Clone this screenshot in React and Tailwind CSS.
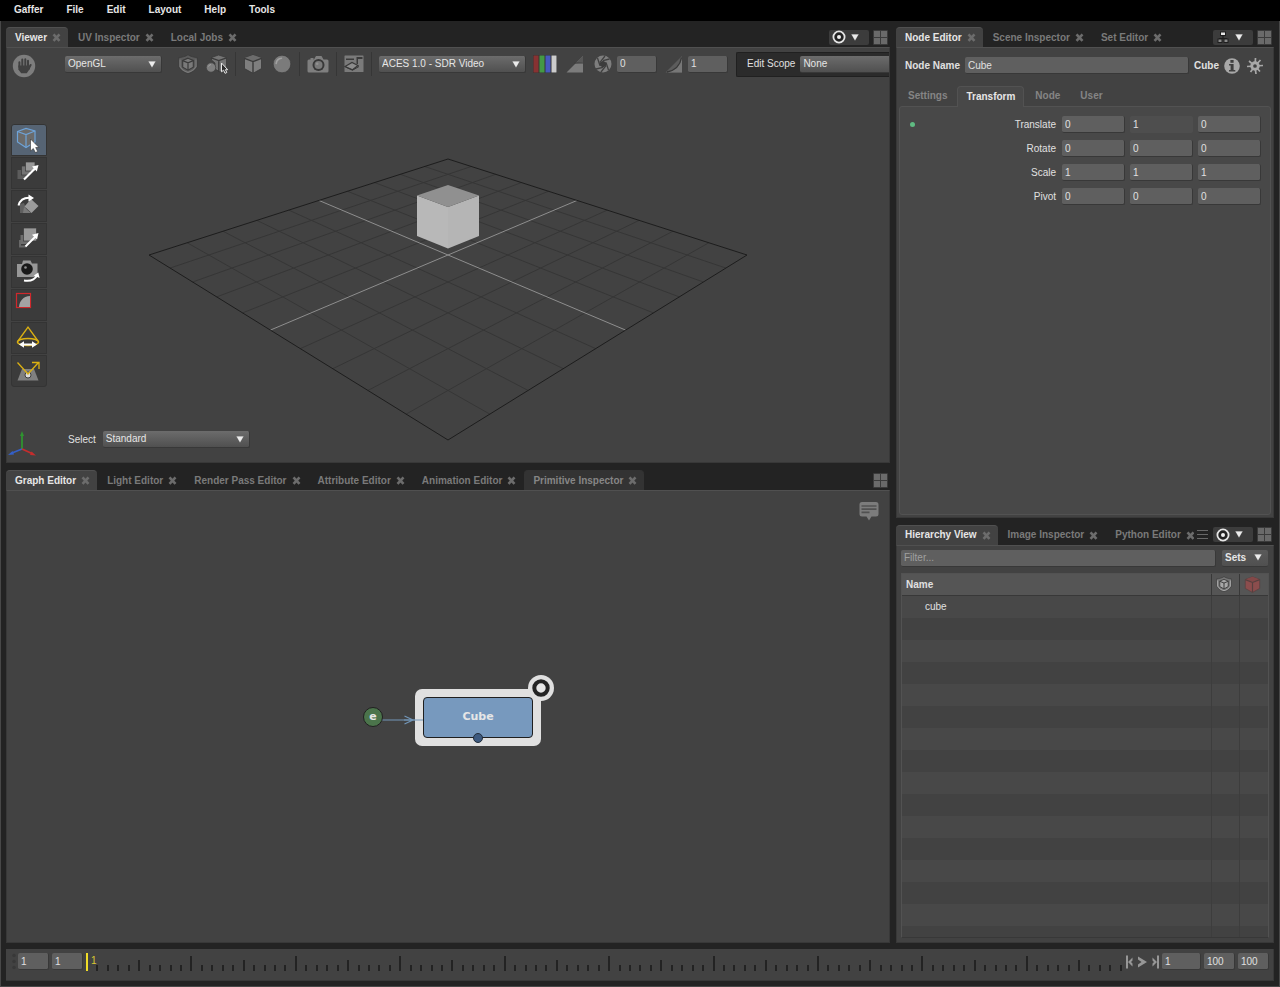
import React from "react";

const FONT = "font-['Liberation_Sans',Arial,sans-serif]";
const FIELD =
  "h-[17px] min-w-0 rounded-[2px] border-b border-r border-[#383838] bg-[#5f5f5f] px-[3px] text-[10px] leading-4 text-[#e0e0e0] outline-none placeholder:text-[#a0a0a0]";

/* ---------- small glyphs ---------- */

const Down = ({ className = "" }) => (
  <svg viewBox="0 0 8 7" className={"h-[7px] w-2 shrink-0 " + className}>
    <path d="M0.2 0.2H7.8L4 6.8Z" fill="#ececec" stroke="#303030" strokeWidth="0.2" />
  </svg>
);

const Close = () => (
  <svg viewBox="0 0 9 9" className="h-[9px] w-[9px]">
    <path d="M1.5 1.3L7.5 7.9M7.5 1.3L1.5 7.9" stroke="#6c6c6c" strokeWidth="2.6" />
  </svg>
);

const GridIcon = () => (
  <svg viewBox="0 0 15 15" className="h-[15px] w-[15px]">
    <rect width="15" height="15" rx="1" fill="#3b3b3b" />
    <path d="M1 1H7V7H1ZM8 1H14V7H8ZM1 8H7V14H1ZM8 8H14V14H8Z" fill="#6a6a6a" />
  </svg>
);

const FocusIcon = () => (
  <svg viewBox="0 0 14 14" className="h-[14px] w-[14px]">
    <circle cx="7" cy="7" r="5.6" fill="#222" stroke="#e6e6e6" strokeWidth="1.8" />
    <circle cx="7" cy="7" r="2" fill="#f0f0f0" />
  </svg>
);

const NodeSetIcon = () => (
  <svg viewBox="0 0 14 14" className="h-[14px] w-[14px]">
    <path d="M7 6V9M3.500 10V8.500H10.500V10" stroke="#1e1e1e" strokeWidth="1.200" fill="none" />
    <rect x="4.500" y="2" width="5" height="3.500" fill="#e8e8e8" stroke="#1e1e1e" />
    <rect x="2" y="9" width="4" height="3.500" fill="#8a8a8a" stroke="#1e1e1e" />
    <rect x="8" y="9" width="4" height="3.500" fill="#8a8a8a" stroke="#1e1e1e" />
  </svg>
);

const HandIcon = () => (
  <svg viewBox="0 0 24 24" className="h-6 w-6">
    <circle cx="12" cy="12" r="11.2" fill="#7d7d7d" />
    <path
      d="M7.4 8.2V13M10.3 5.6V12.5M13.3 5.2V12.5M16 6.8V13M18.6 11L16.5 15"
      stroke="#404040"
      strokeWidth="2"
      strokeLinecap="round"
      fill="none"
    />
    <path d="M6.4 11.5H17L18 14.5L14.8 19.3H9.2L6.4 15.5Z" fill="#404040" />
  </svg>
);

const CubeShape = ({ fill = "#7e7e7e", top = "#6c6c6c", line = "#393939", size = "h-[20px] w-[20px]" }) => (
  <svg viewBox="0 0 20 20" className={size}>
    <path d="M10 1L18.500 4V14.600L10 19.300L1.500 14.600V4Z" fill={fill} stroke={line} strokeWidth="0.800" />
    <path d="M10 1L18.500 4L10 7.300L1.500 4Z" fill={top} />
    <path d="M1.500 4.300L10 7.600L18.500 4.300M10 7.600V19" fill="none" stroke={line} strokeWidth="1.400" />
  </svg>
);

const ShieldCube = ({ tone = "#7a7a7a", back = "#5c5c5c", size = "h-[20px] w-[20px]" }) => (
  <svg viewBox="0 0 20 20" className={size}>
    <path
      d="M0.800 3.500C4 3.500 7.500 2.500 10 0.800C12.500 2.500 16 3.500 19.200 3.500V13C17 16.500 14 18.500 10 19.500C6 18.500 3 16.500 0.800 13Z"
      fill={back}
      stroke="#383838"
      strokeWidth="0.700"
    />
    <path d="M2 5.500V12.500C4 15.800 7 17.700 10 18.300C13 17.700 16 15.800 18 12.500V5.500" fill="none" stroke={tone} strokeWidth="1.200" />
    <path d="M10 4.200L15.300 6.400V13.200L10 16.200L4.700 13.200V6.400Z" fill={tone} stroke="#3a3a3a" strokeWidth="1.100" />
    <path d="M4.700 6.600L10 8.800L15.300 6.600M10 8.800V16" fill="none" stroke="#3a3a3a" strokeWidth="1.200" />
  </svg>
);

const ExpandIcon = () => (
  <svg viewBox="0 0 22 20" className="h-5 w-[22px]">
    <path d="M12.500 1L20.500 3.500V15L14 18L9 15V9L5.500 6V3.500Z" fill="#747474" stroke="#3a3a3a" strokeWidth="0.800" />
    <path d="M5 3.800L12.800 6.600L20.500 3.800M12.800 6.600V18" fill="none" stroke="#3a3a3a" strokeWidth="1.400" />
    <circle cx="5" cy="13.500" r="4.700" fill="#7f7f7f" stroke="#404040" strokeWidth="0.700" />
    <path d="M2.500 12.500A3 3 0 0 1 5 10.500" fill="none" stroke="#a0a0a0" />
    <path d="M15.500 9V17.800L17.600 16.200L19 19.300L20.800 18.500L19.400 15.700H21.700Z" fill="#2c2c2c" stroke="#e6e6e6" strokeWidth="1" />
  </svg>
);

const SphereIcon = () => (
  <svg viewBox="0 0 20 20" className="h-5 w-5">
    <circle cx="10" cy="10" r="8.800" fill="#7b7b7b" stroke="#383838" strokeWidth="0.600" />
    <path d="M4.200 9.500A6 6 0 0 1 9.500 4.200" fill="none" stroke="#a2a2a2" strokeWidth="1.600" strokeLinecap="round" />
  </svg>
);

const CameraIcon = () => (
  <svg viewBox="0 0 22 20" className="h-5 w-[22px]">
    <path d="M2 5.500H3.500V4H6.500V5.500H7L9 2H14.500L16.500 5.500H20Q21.500 5.500 21.500 7V17Q21.500 18.500 20 18.500H2Q0.500 18.500 0.500 17V7Q0.500 5.500 2 5.500Z" fill="#7f7f7f" />
    <circle cx="11.500" cy="11" r="6" fill="#383838" />
    <circle cx="11.500" cy="11" r="4" fill="#7a7a7a" />
    <circle cx="10.200" cy="9.700" r="1.300" fill="#929292" />
  </svg>
);

const GnomonPlane = () => (
  <svg viewBox="0 0 20 18" className="h-[18px] w-5">
    <rect x="0.500" y="0.500" width="19" height="16.500" rx="0.500" fill="#7a7a7a" />
    <path d="M2 3.500H10V5H2ZM12.500 2H18.500V4H14V9H12.500Z" fill="#3a3a3a" />
    <path d="M1 11.500L8 7.500L14 10.500L8.500 14.800Z" fill="#8c8c8c" stroke="#383838" strokeWidth="1.200" />
    <path d="M1.500 12L8.500 15.200L15 11.500" fill="none" stroke="#383838" strokeWidth="1" />
  </svg>
);

const RgbIcon = () => (
  <svg viewBox="0 0 24 18" className="h-[18px] w-6">
    <rect width="24" height="18" fill="#353535" />
    <rect x="0.500" y="0.500" width="5" height="17" fill="#883232" />
    <rect x="6.500" y="0.500" width="5" height="17" fill="#449944" />
    <rect x="12.500" y="0.500" width="5" height="17" fill="#4759bd" />
    <rect x="18.500" y="0.500" width="5" height="17" fill="#cccccc" />
  </svg>
);

const ClipRamp = () => (
  <svg viewBox="0 0 18 18" className="h-[18px] w-[18px]">
    <path d="M0.500 17.500L17 1V17.500Z" fill="#7c7c7c" />
    <path d="M9.500 8.500L17 1V7.500Z" fill="#575757" />
    <path d="M8 8H17" stroke="#3d3d3d" />
  </svg>
);

const GammaRamp = () => (
  <svg viewBox="0 0 18 18" className="h-[18px] w-[18px]">
    <path d="M0.500 17.500L17 1V17.500Z" fill="#5c5c5c" />
    <path d="M2 17.500C10 16 15.500 11 17 2.500V17.500Z" fill="#777777" />
    <path d="M2 17C10 15.500 15 11 16.500 2.500" fill="none" stroke="#383838" strokeWidth="1.300" />
  </svg>
);

const Aperture = () => (
  <svg viewBox="0 0 18 18" className="h-[18px] w-[18px]">
    <circle cx="9" cy="9" r="8.500" fill="#7e7e7e" />
    <path d="M9 5.700L12 7.400V10.700L9 12.400L6 10.700V7.400Z" fill="#3c3c3c" />
    <path d="M9 5.700L15.500 4M12 7.400L14.500 15M12 10.700L7 17M9 12.400L2 14M6 10.700L3.500 3M6 7.400L11 1" stroke="#404040" strokeWidth="1.300" />
  </svg>
);

const InfoIcon = () => (
  <svg viewBox="0 0 16 16" className="h-4 w-4">
    <circle cx="8" cy="8" r="7.800" fill="#a8a8a8" />
    <rect x="6.400" y="2" width="3.200" height="2.800" fill="#404040" />
    <path d="M5 6H9.600V12H11.300V13.500H5V12H6.600V7.500H5Z" fill="#404040" />
  </svg>
);

const GearIcon = () => (
  <svg viewBox="0 0 16 16" className="h-4 w-4">
    <path d="M8.500 0L8 8L9 16M0 8.500L8 8L16 7.500M2 3L8 8L13 13.500M13.500 2L8 8L3.500 14" fill="none" stroke="#a8a8a8" strokeWidth="1.700" />
    <circle cx="8" cy="8" r="3.300" fill="#404040" stroke="#a8a8a8" strokeWidth="2.900" />
  </svg>
);

const Speech = () => (
  <svg viewBox="0 0 20 20" className="h-5 w-5">
    <path d="M3 1H17Q19.500 1 19.500 3.500V13Q19.500 15.500 17 15.500H12.500L10 19.500L7.500 15.500H3Q0.500 15.500 0.500 13V3.500Q0.500 1 3 1Z" fill="#7c7c7c" />
    <path d="M2.500 5H17.500M2.500 8.200H17.500M2.500 11.400H10.500" stroke="#515151" strokeWidth="1.700" />
  </svg>
);

/* ---------- viewer tools ---------- */

const toolArt = [
  <g key="a">
    <path d="M2.500 4.500L11 1.500L20 4V15L11 20.500L2.500 15Z" fill="#6b6b6b" stroke="#6ea3d8" strokeWidth="1.200" />
    <path d="M2.500 4.500L11 7.500L20 4M11 7.500V20.500" fill="none" stroke="#6ea3d8" strokeWidth="1.200" />
    <path d="M15.500 12V24L18.300 21.500L20.400 25.600L22.700 24.500L20.700 20.500H24Z" fill="#fff" stroke="#333" strokeWidth="0.600" />
  </g>,
  <g key="b">
    <rect x="2.500" y="10" width="9" height="9" fill="#5c5c5c" />
    <rect x="6.500" y="6" width="9" height="9" fill="#747474" stroke="#3a3a3a" strokeWidth="0.700" />
    <rect x="10.500" y="2" width="9.500" height="9" fill="#999" stroke="#3a3a3a" strokeWidth="0.700" />
    <path d="M9 19.500L21 7.500" stroke="#fff" strokeWidth="2.200" />
    <path d="M17 6.500L23.500 5L21.800 11.500Z" fill="#fff" />
  </g>,
  <g key="c">
    <path d="M5 11V20H13L9 10Z" fill="#606060" />
    <path d="M9 14L16 20H8Z" fill="#7a7a7a" />
    <path d="M16 6L23.500 13L16.500 20L9.500 13.500Z" fill="#9b9b9b" />
    <path d="M3.500 12.500C5 7 9 4.500 15 4.800" fill="none" stroke="#fff" strokeWidth="2" />
    <path d="M13.500 1.500L19 5L13.500 8.500Z" fill="#fff" />
  </g>,
  <g key="d">
    <path d="M5 14V20.500H11" fill="none" stroke="#686868" strokeWidth="2" />
    <rect x="5.500" y="9" width="9" height="9" fill="#6d6d6d" />
    <rect x="8.500" y="2" width="13" height="13" fill="#999" stroke="#3a3a3a" strokeWidth="0.700" />
    <path d="M10.500 20.500L20.500 10.500" stroke="#fff" strokeWidth="2" />
    <path d="M17 8.800L23.500 7L22 13.500Z" fill="#fff" />
  </g>,
  <g key="e">
    <path d="M2 5H7L8 1.500H15.500L17 4.500H22.500V18H2Z" fill="#979797" />
    <circle cx="12" cy="10" r="5.800" fill="#191919" />
    <circle cx="10.500" cy="8.500" r="1.300" fill="#8f8f8f" />
    <path d="M9 21.500C15 22.500 20 20.500 22.300 16" fill="none" stroke="#fff" strokeWidth="1.900" />
    <path d="M18.800 16.500L23.300 13.500L24.600 19Z" fill="#fff" />
  </g>,
  <g key="f">
    <rect x="1.500" y="1.500" width="14" height="14" fill="none" stroke="#d0282c" strokeWidth="1.200" />
    <path d="M4 15C4.500 9 8 4.500 15 4V15Z" fill="#a3a3a3" />
  </g>,
  <g key="g">
    <path d="M3 16L13 2L23 16" fill="none" stroke="#dbb012" strokeWidth="1.300" />
    <ellipse cx="13" cy="17" rx="10.500" ry="3.600" fill="none" stroke="#dbb012" strokeWidth="1.500" />
    <path d="M7 19.500H19" stroke="#fff" strokeWidth="2" />
    <path d="M4 19.500L9 16.300V22.700ZM22 19.500L17 16.300V22.700Z" fill="#fff" />
  </g>,
  <g key="h">
    <path d="M7 11H19L23.500 22.500H2.500Z" fill="#808080" />
    <circle cx="13" cy="17" r="3" fill="#ddd" stroke="#333" strokeWidth="0.900" />
    <path d="M2.500 4.500L13 16L23.500 4.500M17 4.500H24V11" fill="none" stroke="#dbb012" strokeWidth="1.300" />
  </g>,
];
const toolNames = ["Selection", "Translate", "Rotate", "Scale", "Camera", "Crop Window", "Light", "Light Position"];

/* ---------- ground plane in perspective ---------- */

const far = [300, 2];
const right = [599, 98];
const near = [300, 283];
const left = [1, 98];

function project(u, v) {
  const [[x0, y0], [x1, y1], [x2, y2], [x3, y3]] = [far, right, near, left];
  const dx1 = x1 - x2, dx2 = x3 - x2, sx = x0 - x1 + x2 - x3;
  const dy1 = y1 - y2, dy2 = y3 - y2, sy = y0 - y1 + y2 - y3;
  const det = dx1 * dy2 - dx2 * dy1;
  const g = (sx * dy2 - dx2 * sy) / det;
  const h = (dx1 * sy - sx * dy1) / det;
  const w = g * u + h * v + 1;
  return [
    ((x1 - x0 + g * x1) * u + (x3 - x0 + h * x3) * v + x0) / w,
    ((y1 - y0 + g * y1) * u + (y3 - y0 + h * y3) * v + y0) / w,
  ];
}

function GridLine({ from, to, color }) {
  const a = project(...from);
  const b = project(...to);
  return <line x1={a[0]} y1={a[1]} x2={b[0]} y2={b[1]} stroke={color} strokeWidth="1" />;
}

function Scene() {
  const steps = [1, 2, 3, 4, 6, 7, 8, 9].map((n) => n / 10);
  return (
    <svg viewBox="0 0 600 285" className="h-[285px] w-[600px] shrink-0">
      {steps.map((s) => (
        <g key={s}>
          <GridLine from={[s, 0]} to={[s, 1]} color="#363636" />
          <GridLine from={[0, s]} to={[1, s]} color="#363636" />
        </g>
      ))}
      <GridLine from={[0.5, 0]} to={[0.5, 1]} color="#8e8e8e" />
      <GridLine from={[0, 0.5]} to={[1, 0.5]} color="#8e8e8e" />
      <polygon points={[far, right, near, left].join(" ")} fill="none" stroke="#1d1d1d" />
      <path d="M269 38.500L300 50V91.500L269 79Z" fill="#b8b8b8" />
      <path d="M331 38.500L300 50V91.500L331 79Z" fill="#b5b5b5" />
      <path d="M300 28L331 38.500L300 50L269 38.500Z" fill="#909090" />
    </svg>
  );
}

/* ---------- shared widgets ---------- */

function Select({ label, value, className }) {
  return (
    <div className={"relative flex shrink-0 items-center " + className}>
      <select
        aria-label={label}
        className="h-[17px] w-full appearance-none rounded-[2px] border-b border-r border-[#383838] bg-linear-to-b from-[#6c6c6c] to-[#505050] px-[3px] text-[10px] leading-4 text-[#e6e6e6] outline-none"
      >
        <option>{value}</option>
      </select>
      <Down className="pointer-events-none absolute right-[6px]" />
    </div>
  );
}

function Tab({ name, active, hover }) {
  const look = active
    ? "bg-[#424242] border-[#505050] text-[#e6e6e6]"
    : hover
      ? "bg-[#333333] border-[#333333] text-[#868686]"
      : "border-transparent text-[#7a7a7a]";
  return (
    <div className={"flex h-5 shrink-0 items-center gap-[5px] rounded-t-[4px] border-t pl-[9px] pr-[7px] " + look}>
      <button className="whitespace-nowrap text-[10px] font-bold leading-4">{name}</button>
      <button aria-label={"Close " + name}>
        <Close />
      </button>
    </div>
  );
}

function TabBar({ tabs, hovered, focus, overflow }) {
  return (
    <div className="flex h-5 shrink-0 items-center pr-[2px]">
      <div className="flex min-w-0 flex-1 gap-px overflow-hidden">
        {tabs.map((t, i) => (
          <Tab key={t} name={t} active={i === 0} hover={t === hovered} />
        ))}
      </div>
      {overflow && (
        <button aria-label="All tabs" className="ml-[3px] shrink-0">
          <svg viewBox="0 0 11 11" className="h-[11px] w-[11px]">
            <path d="M0 1.500H11M0 5.500H11M0 9.500H11" stroke="#686868" />
          </svg>
        </button>
      )}
      {focus && (
        <button aria-label="Follow" className="ml-[5px] flex h-[15px] w-10 shrink-0 items-center gap-[5px] rounded-[2px] bg-[#3c3c3c] pl-[3px]">
          {focus}
          <Down />
        </button>
      )}
      <button aria-label="Layout" className="ml-1 shrink-0">
        <GridIcon />
      </button>
    </div>
  );
}

const PANEL = "min-h-0 flex-1 border-x border-b border-t border-[#383838] border-t-[#505050] bg-[#424242]";

const Sep = () => <div className="h-6 w-px shrink-0 bg-[#363636]" />;

/* ---------- editors ---------- */

function Viewer() {
  return (
    <section className="flex min-h-0 flex-[436] flex-col">
      <TabBar tabs={["Viewer", "UV Inspector", "Local Jobs"]} focus={<FocusIcon />} />
      <div className={PANEL + " relative flex flex-col overflow-hidden"}>
        <div className="pointer-events-none absolute inset-0 flex items-center justify-center pt-[88px]">
          <Scene />
        </div>
        <div className="relative mt-[3px] flex h-[26px] shrink-0 items-center pl-[5px]">
          <button aria-label="Pan" className="mr-[29px] mt-[3px] shrink-0"><HandIcon /></button>
          <Select label="Renderer" value="OpenGL" className="w-[97px]" />
          <div className="ml-4 flex shrink-0 items-center gap-[7px]">
            <div className="flex items-center gap-2">
              <button aria-label="Visible set"><ShieldCube /></button>
              <button aria-label="Expansion"><ExpandIcon /></button>
            </div>
            <Sep />
            <div className="flex items-center gap-[9px]">
              <button aria-label="Drawing mode"><CubeShape /></button>
              <button aria-label="Shading mode"><SphereIcon /></button>
            </div>
            <Sep />
            <button aria-label="Camera"><CameraIcon /></button>
            <Sep />
            <button aria-label="Gnomon"><GnomonPlane /></button>
            <Sep />
          </div>
          <Select label="Display transform" value="ACES 1.0 - SDR Video" className="ml-[7px] w-[147px]" />
          <button aria-label="Channels" className="ml-[7px] shrink-0"><RgbIcon /></button>
          <button aria-label="Clipping" className="ml-[9px] shrink-0"><ClipRamp /></button>
          <button aria-label="Exposure reset" className="ml-[10px] shrink-0"><Aperture /></button>
          <input aria-label="Exposure" defaultValue="0" className={FIELD + " ml-[5px] w-10 shrink-0"} />
          <button aria-label="Gamma reset" className="ml-2 shrink-0"><GammaRamp /></button>
          <input aria-label="Gamma" defaultValue="1" className={FIELD + " ml-[5px] w-10 shrink-0"} />
          <div className="ml-2 flex h-[25px] min-w-0 flex-1 items-center gap-[5px] overflow-hidden rounded-l-[2px] border border-r-0 border-[#202020] bg-[#2b2b2b] pl-[10px]">
            <span className="shrink-0 text-[10px] leading-4 text-[#e0e0e0]">Edit Scope</span>
            <Select label="Edit Scope" value="None" className="w-[140px]" />
          </div>
        </div>
        <div className="relative ml-1 mt-[47px] flex w-9 flex-col gap-px self-start">
          {toolArt.map((art, i) => (
            <button
              key={i}
              aria-label={toolNames[i]}
              className={
                "flex h-8 items-center border border-[#343434] pl-[3px] first:rounded-t-[3px] last:rounded-b-[3px] " +
                (i === 0 ? "bg-[#566474]" : "bg-[#3b3b3b]")
              }
            >
              <svg viewBox="0 0 26 26" className="h-[26px] w-[26px]">{art}</svg>
            </button>
          ))}
        </div>
        <div className="relative mb-1 mt-auto flex shrink-0 items-start pl-px">
          <svg viewBox="0 0 30 28" className="h-7 w-[30px] shrink-0">
            <path d="M14 19V4" stroke="#2f9330" strokeWidth="1.800" />
            <path d="M12 6L14 1L16 6Z" fill="#2f9330" />
            <path d="M14 19L4 23" stroke="#3460c8" strokeWidth="1.800" />
            <path d="M0 25L4.500 21L6 24.500Z" fill="#3460c8" />
            <path d="M14 19L24 23.500" stroke="#c52d2d" strokeWidth="1.800" />
            <path d="M28 25.500L22 25L23.500 21.500Z" fill="#c52d2d" />
          </svg>
          <span className="ml-[30px] mr-[7px] text-[10px] leading-5 text-[#e0e0e0]">Select</span>
          <Select label="Select" value="Standard" className="mt-px w-[147px]" />
        </div>
      </div>
    </section>
  );
}

function GraphEditor() {
  return (
    <section className="flex min-h-0 flex-[472] flex-col">
      <TabBar
        tabs={["Graph Editor", "Light Editor", "Render Pass Editor", "Attribute Editor", "Animation Editor", "Primitive Inspector"]}
        hovered="Primitive Inspector"
      />
      <div className={PANEL + " relative overflow-hidden"}>
        <div className="flex justify-end pr-[10px] pt-[10px]">
          <button aria-label="Annotations"><Speech /></button>
        </div>
        <div className="absolute left-1/2 top-1/2">
          <svg viewBox="0 0 62 12" className="absolute left-[-66px] top-[-3px] h-3 w-[62px]">
            <path d="M0 6H40" fill="none" stroke="#7296b8" strokeWidth="1.200" />
          </svg>
          <div className="absolute left-[-33px] top-[-28px] h-[57px] w-[126px] rounded-[7px] bg-[#e0e0e0] p-2">
            <div className="flex h-full items-center justify-center rounded-[4px] border border-[#1f1f1f] bg-[#7799be] font-['DejaVu_Sans',sans-serif] text-[11px] font-bold text-[#e6e6e6]">
              Cube
            </div>
          </div>
          <svg viewBox="0 0 10 10" className="absolute left-[25px] top-4 h-[10px] w-[10px]">
            <circle cx="5" cy="5" r="4.500" fill="#3d5a80" stroke="#222d3a" />
          </svg>
          <svg viewBox="0 0 20 12" className="absolute left-[-44px] top-[-3px] h-3 w-5">
            <path d="M0.500 2L9 6L0.500 10M0 6H19" fill="none" stroke="#7296b8" strokeWidth="1.200" />
          </svg>
          <svg viewBox="0 0 26 26" className="absolute left-[80px] top-[-42px] h-[26px] w-[26px]">
            <circle cx="13" cy="13" r="13" fill="#e0e0e0" />
            <circle cx="13" cy="13" r="6.700" fill="#e6e6e6" stroke="#242424" strokeWidth="4" />
          </svg>
          <div className="absolute left-[-85px] top-[-10px] flex h-5 w-5 items-center justify-center rounded-full border border-[#202020] bg-[#4b744b] font-['DejaVu_Sans',sans-serif] text-[11px] font-bold leading-none text-[#e6e6e6]">
            e
          </div>
        </div>
      </div>
    </section>
  );
}

const plugs = [
  ["Translate", ["0", "1", "0"]],
  ["Rotate", ["0", "0", "0"]],
  ["Scale", ["1", "1", "1"]],
  ["Pivot", ["0", "0", "0"]],
];

function NodeEditor() {
  return (
    <section className="flex min-h-0 flex-[490] flex-col">
      <TabBar tabs={["Node Editor", "Scene Inspector", "Set Editor"]} focus={<NodeSetIcon />} />
      <div className={PANEL + " flex flex-col px-[2px] pb-[2px]"}>
        <div className="flex h-[38px] shrink-0 items-center pb-[3px] pl-[6px] pr-2 text-[10px] font-bold text-[#e0e0e0]">
          <label htmlFor="node-name" className="shrink-0">Node Name</label>
          <input id="node-name" defaultValue="Cube" className={FIELD + " ml-[5px] mr-[5px] flex-1 font-normal"} />
          <span>Cube</span>
          <button aria-label="Info" className="ml-[5px]"><InfoIcon /></button>
          <button aria-label="Node settings" className="ml-[7px]"><GearIcon /></button>
        </div>
        <div className="relative z-10 -mb-px flex h-[21px] shrink-0 items-stretch text-[10px] font-bold text-[#858585]">
          <button className="px-[9px] pb-[2px]">Settings</button>
          <button className="ml-px rounded-t-[4px] border border-b-0 border-[#525252] bg-[#484848] px-2 pb-[2px] text-[#e6e6e6]">Transform</button>
          <button className="pb-[2px] pl-[11px] pr-[10px]">Node</button>
          <button className="px-[10px] pb-[2px]">User</button>
        </div>
        <div className="flex min-h-0 flex-1 flex-col gap-[7px] rounded-[3px] border border-[#525252] bg-[#484848] pb-2 pl-[10px] pr-[9px] pt-[9px]">
          {plugs.map(([name, values], r) => (
            <div key={name} className="flex h-[17px] items-center gap-[5px]">
              <div className="w-[5px] shrink-0">
                {r === 0 && <div className="h-[5px] w-[5px] rounded-full bg-[#5fbb82]" />}
              </div>
              <span className="flex-1 pr-px text-right text-[10px] text-[#e0e0e0]">{name}</span>
              {values.map((v, i) => (
                <input
                  key={i}
                  aria-label={name + " " + "XYZ"[i]}
                  defaultValue={v}
                  className={FIELD + " w-[63px]" + (r === 0 && i === 1 ? " border-transparent! bg-[#4e4e4e]!" : "")}
                />
              ))}
            </div>
          ))}
        </div>
      </div>
    </section>
  );
}

function HierarchyView() {
  return (
    <section className="flex min-h-0 flex-[418] flex-col">
      <TabBar tabs={["Hierarchy View", "Image Inspector", "Python Editor"]} focus={<FocusIcon />} overflow />
      <div className={PANEL + " flex flex-col px-1 pb-1 pt-1"}>
        <div className="flex shrink-0 gap-[6px] pr-px">
          <input aria-label="Filter" placeholder="Filter..." className={FIELD + " flex-1"} />
          <button className="flex h-[17px] w-[46px] items-center justify-between rounded-[2px] border-b border-[#383838] bg-linear-to-b from-[#5a5a5a] to-[#505050] pl-[3px] pr-[6px] text-[10px] font-bold text-[#e6e6e6]">
            Sets
            <Down />
          </button>
        </div>
        <div className="mt-[6px] min-h-0 flex-1 overflow-hidden border border-[#525252] border-b-[#383838]">
          <table className="w-full table-fixed border-collapse text-left text-[10px] text-[#e0e0e0]">
            <thead>
              <tr className="h-[22px] border-b border-[#383838] bg-[#555555]">
                <th className="pl-1">Name</th>
                <th aria-label="Visible" className="w-7 border-l border-[#383838]">
                  <div className="flex pl-1"><ShieldCube tone="#a8a8a8" back="#767676" size="h-4 w-4" /></div>
                </th>
                <th aria-label="Excluded" className="w-[29px] border-l border-[#383838]">
                  <div className="flex pl-1"><CubeShape fill="#8b4d4d" top="#834848" line="#55403f" size="h-[17px] w-[17px]" /></div>
                </th>
              </tr>
            </thead>
            <tbody>
              {Array.from({ length: 16 }, (_, i) => (
                <tr key={i} className="h-[22px] odd:bg-[#484848] even:bg-[#424242]">
                  <td className="pl-[23px]">{i === 0 ? "cube" : ""}</td>
                  <td className="border-l border-[#3d3d3d]" />
                  <td className="border-l border-[#3d3d3d]" />
                </tr>
              ))}
            </tbody>
          </table>
        </div>
      </div>
    </section>
  );
}

function Timeline() {
  return (
    <footer className="mx-[5px] mb-[5px] mt-[6px] flex h-8 shrink-0 items-start border-b border-r border-[#383838] bg-[#424242] pr-1 pt-1">
      <svg viewBox="0 0 4 17" className="ml-[6px] mr-[2px] h-[17px] w-1 shrink-0">
        <path d="M2 2.500V2.600M2 8.500V8.600M2 14.500V14.600" stroke="#383838" strokeWidth="3.500" strokeLinecap="round" />
      </svg>
      <input aria-label="Start frame" defaultValue="1" className={FIELD + " w-[31px]"} />
      <input aria-label="Range start" defaultValue="1" className={FIELD + " ml-[3px] w-[31px]"} />
      <div className="relative ml-[3px] mr-[3px] h-[18px] min-w-0 flex-1">
        <svg className="h-[18px] w-full">
          {Array.from({ length: 99 }, (_, k) => {
            const i = k + 1;
            const top = i % 10 === 0 ? 3 : i % 5 === 0 ? 7 : 12;
            return <rect key={i} x={(i * 100.7) / 100 + "%"} y={top} width="2" height={18 - top} fill="#232323" shapeRendering="crispEdges" />;
          })}
          <rect width="2" height="18" fill="#f0dc28" />
        </svg>
        <span className="absolute left-[5px] top-0 text-[10px] leading-4 text-[#d8c832]">1</span>
      </div>
      <div className="mr-[3px] flex h-[17px] items-center gap-[5px]">
        <button aria-label="Go to start">
          <svg viewBox="0 0 7 14" className="h-[14px] w-[7px]"><path d="M0 0.500H2V13.500H0ZM2 7L6.500 2.500V5.500L5 7L6.500 8.500V11.500Z" fill="#979797" /></svg>
        </button>
        <button aria-label="Play">
          <svg viewBox="0 0 9 14" className="h-[14px] w-[9px]"><path d="M0 1.500L9 7L0 12.500V9.500L3.500 7L0 4.500Z" fill="#979797" /></svg>
        </button>
        <button aria-label="Go to end">
          <svg viewBox="0 0 7 14" className="h-[14px] w-[7px]"><path d="M5 0.500H7V13.500H5ZM5 7L0.500 2.500V5.500L2 7L0.500 8.500V11.500Z" fill="#979797" /></svg>
        </button>
      </div>
      <input aria-label="Current frame" defaultValue="1" className={FIELD + " w-[39px]"} />
      <input aria-label="Range end" defaultValue="100" className={FIELD + " ml-[3px] w-[31px]"} />
      <input aria-label="End frame" defaultValue="100" className={FIELD + " ml-[3px] w-[31px]"} />
    </footer>
  );
}

export default function App() {
  return (
    <div className={"flex h-screen min-h-[640px] flex-col bg-[#232323] " + FONT}>
      <nav className="flex h-[21px] shrink-0 items-center gap-[23px] bg-black pb-[2px] pl-[14px] text-[10px] font-bold text-[#e6e6e6]">
        {["Gaffer", "File", "Edit", "Layout", "Help", "Tools"].map((m) => (
          <button key={m}>{m}</button>
        ))}
      </nav>
      <div className="flex min-h-0 flex-1 flex-col border-x border-b border-[#484848]">
        <main className="flex min-h-0 flex-1 gap-[6px] px-[5px] pt-[6px]">
          <div className="flex min-w-0 flex-[884] flex-col gap-[7px]">
            <Viewer />
            <GraphEditor />
          </div>
          <div className="flex min-w-0 flex-[378] flex-col gap-[7px]">
            <NodeEditor />
            <HierarchyView />
          </div>
        </main>
        <Timeline />
      </div>
    </div>
  );
}
